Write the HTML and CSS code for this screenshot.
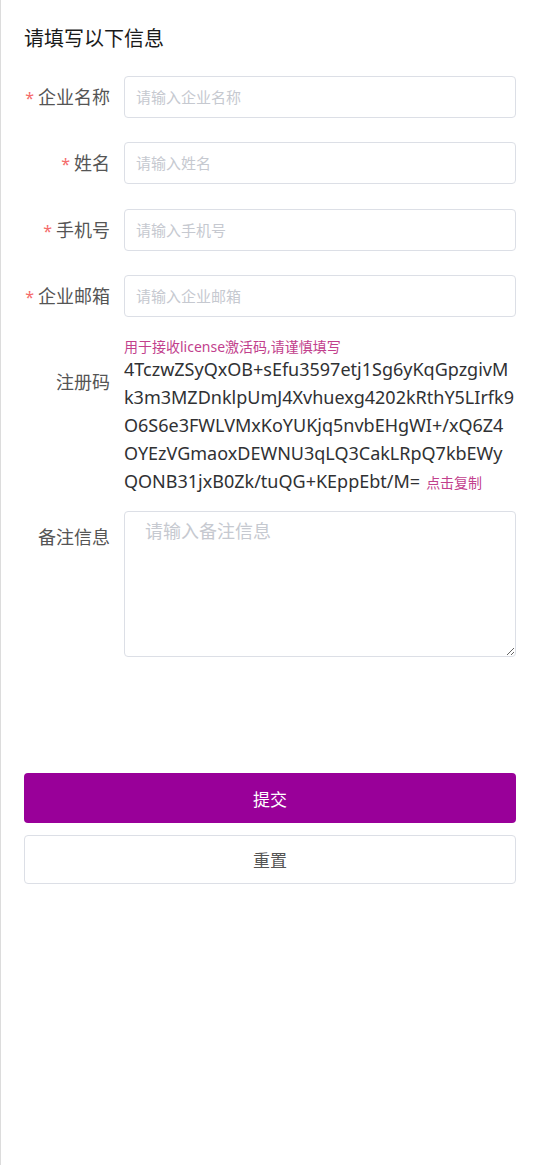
FILE: index.html
```html
<!DOCTYPE html>
<html lang="zh-CN">
<head>
    <meta charset="UTF-8">
    <meta name="viewport" content="width=device-width, initial-scale=1.0">
    <title>请填写以下信息</title>
    <link rel="stylesheet" href="styles.css">
</head>
<body>
    <main class="page">
        <h2 class="page-title">请填写以下信息</h2>

        <form class="info-form">
            <div class="form-item">
                <label class="form-label"><span class="star">*</span>企业名称</label>
                <div class="form-content">
                    <input class="text-input" type="text" placeholder="请输入企业名称">
                </div>
            </div>

            <div class="form-item">
                <label class="form-label"><span class="star">*</span>姓名</label>
                <div class="form-content">
                    <input class="text-input" type="text" placeholder="请输入姓名">
                </div>
            </div>

            <div class="form-item">
                <label class="form-label"><span class="star">*</span>手机号</label>
                <div class="form-content">
                    <input class="text-input" type="text" placeholder="请输入手机号">
                </div>
            </div>

            <div class="form-item">
                <label class="form-label"><span class="star">*</span>企业邮箱</label>
                <div class="form-content">
                    <input class="text-input" type="text" placeholder="请输入企业邮箱">
                </div>
            </div>

            <div class="form-item form-item-code">
                <label class="form-label label-code">注册码</label>
                <div class="form-content">
                    <div class="code-tip">用于接收license激活码,请谨慎填写</div>
                    <div class="code-text">4TczwZSyQxOB+sEfu3597etj1Sg6yKqGpzgivMk3m3MZDnklpUmJ4Xvhuexg4202kRthY5LIrfk9O6S6e3FWLVMxKoYUKjq5nvbEHgWI+/xQ6Z4OYEzVGmaoxDEWNU3qLQ3CakLRpQ7kbEWyQONB31jxB0Zk/tuQG+KEppEbt/M=<span class="copy-link">点击复制</span></div>
                </div>
            </div>

            <div class="form-item">
                <label class="form-label label-remark">备注信息</label>
                <div class="form-content">
                    <textarea class="text-area" placeholder="请输入备注信息"></textarea>
                </div>
            </div>

            <div class="form-actions">
                <button type="submit" class="btn btn-primary">提交</button>
                <button type="reset" class="btn btn-default">重置</button>
            </div>
        </form>
    </main>
</body>
</html>
```

FILE: styles.css
```css
/* Page base */
html, body {
    margin: 0;
    padding: 0;
    background-color: #fff;
}

body {
    font-family: "Noto Sans", "Noto Sans CJK SC", sans-serif;
    color: #606266;
    border-left: 1px solid #dcdcdc;
    min-height: 1165px;
    box-sizing: border-box;
}

.page {
    padding: 24px 23px 0 23px;
}

.page-title {
    margin: 0 0 22px 0;
    font-size: 20px;
    font-weight: normal;
    line-height: 30px;
    color: #1a1a1a;
}

/* Form rows */
.form-item {
    display: flex;
    margin-bottom: 24.3px;
}

.form-label {
    width: 86px;
    height: 42px;
    flex-shrink: 0;
    padding-right: 14px;
    text-align: right;
    font-size: 18px;
    line-height: 42px;
    white-space: nowrap;
    color: #555;
}

.star {
    color: #f56c6c;
    font-size: 16px;
    line-height: 1;
    margin-right: 4px;
}

.form-content {
    flex: 1;
    min-width: 0;
}

.text-input {
    display: block;
    width: 100%;
    height: 42px;
    box-sizing: border-box;
    padding: 0 11px;
    border: 1px solid #dcdfe6;
    border-radius: 4px;
    font-family: inherit;
    font-size: 15px;
    color: #606266;
    outline: none;
}

.text-input::placeholder,
.text-area::placeholder {
    color: #c6c9d0;
}

/* Registration code */
.form-item-code {
    margin-bottom: 16px;
}

.label-code {
    padding-top: 20px;
}

.code-tip {
    margin-top: -2px;
    font-size: 14px;
    line-height: 16px;
    color: #c23f8d;
}

.code-text {
    font-size: 18px;
    line-height: 28px;
    color: #303133;
    word-break: break-all;
}

.copy-link {
    margin-left: 6px;
    font-size: 14px;
    line-height: 1;
    color: #c23f8d;
    cursor: pointer;
}

/* Remark */
.label-remark {
    line-height: 52px;
}

.text-area {
    display: block;
    width: 100%;
    height: 146px;
    box-sizing: border-box;
    padding: 6px 20px;
    border: 1px solid #dcdfe6;
    border-radius: 4px;
    font-family: inherit;
    font-size: 18px;
    line-height: 26px;
    resize: vertical;
    outline: none;
}

/* Buttons */
.form-actions {
    display: flex;
    flex-direction: column;
    gap: 12px;
    margin-top: 116px;
}

.btn {
    width: 100%;
    border-radius: 4px;
    font-family: inherit;
    font-size: 17px;
    cursor: pointer;
}

.btn-primary {
    height: 50px;
    border: none;
    background-color: #990099;
    color: #fff;
}

.btn-default {
    height: 49px;
    border: 1px solid #dcdfe6;
    background-color: #fff;
    color: #555;
}
```
